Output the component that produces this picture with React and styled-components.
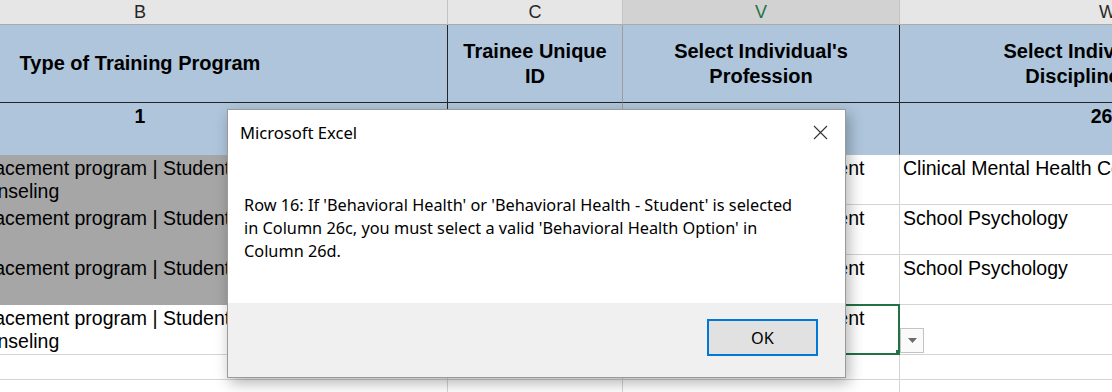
import React from "react";
import styled, { createGlobalStyle } from "styled-components";

const GlobalStyle = createGlobalStyle`
  html, body {
    margin: 0;
    padding: 0;
    background: #fff;
    overflow: hidden;
  }
  body {
    font-family: "Liberation Sans", Arial, sans-serif;
  }
`;

const BLUE = "#aec5db";
const GRID = "#d4d4d4";

const Page = styled.div`
  position: relative;
  width: 1112px;
  height: 392px;
  overflow: hidden;
  background: #fff;
`;

// sheet is scrolled: column B starts left of the window
const Sheet = styled.div`
  display: grid;
  grid-template-columns: 615px 175px 277px 416px;
  grid-template-rows: 25px 78px 52px 50px 50px 50px 50px 25px 25px;
  margin-left: -167px;
`;

const ColLetter = styled.div`
  box-sizing: border-box;
  display: flex;
  align-items: center;
  justify-content: center;
  background: ${(p) => (p.$active ? "#d2d2d2" : "#e6e6e6")};
  color: ${(p) => (p.$active ? "#217346" : "#262626")};
  border-right: 1px solid #c4c4c4;
  border-bottom: 1px solid #ababab;
  font-size: 18px;
`;

const HeadCell = styled.div`
  box-sizing: border-box;
  display: flex;
  align-items: center;
  justify-content: center;
  text-align: center;
  background: ${BLUE};
  border-right: 1px solid ${(p) => p.$edge || "#262626"};
  border-bottom: 1px solid #262626;
  font-weight: bold;
  font-size: 20px;
  line-height: 25px;
  color: #000;
  white-space: pre-line;
`;

const NumCell = styled.div`
  box-sizing: border-box;
  background: ${BLUE};
  border-right: 1px solid ${(p) => p.$edge || "#262626"};
  border-bottom: 1px solid ${BLUE};
  text-align: center;
  padding-top: 2px;
  font-weight: bold;
  font-size: 19.5px;
  line-height: 23px;
`;

const DataCell = styled.div`
  box-sizing: border-box;
  position: relative;
  background: ${(p) => p.$fill || "#fff"};
  border-right: 1px solid ${(p) => p.$fill || GRID};
  border-bottom: 1px solid ${(p) => p.$fill || GRID};
  padding: 2px 3px 0;
  font-size: 19.5px;
  line-height: 23px;
  color: #000;
  white-space: nowrap;
  overflow: ${(p) => (p.$selected ? "visible" : "hidden")};
`;

const Line = styled.div`
  overflow: hidden;
`;

const Selection = styled.div`
  position: absolute;
  top: -1px;
  left: -1px;
  right: -1px;
  bottom: -1px;
  border: 2px solid #217346;
  pointer-events: none;
`;

const Handle = styled.div`
  position: absolute;
  right: -3px;
  bottom: -2px;
  width: 5px;
  height: 5px;
  background: #217346;
`;

const DropButton = styled.div`
  position: absolute;
  left: calc(100% + 1px);
  top: 23px;
  width: 24px;
  height: 25px;
  box-sizing: border-box;
  border: 1px solid #c3c3c3;
  background: #fafafa;
  display: flex;
  align-items: center;
  justify-content: center;
  z-index: 1;
`;

const Dialog = styled.div`
  position: absolute;
  left: 227px;
  top: 109px;
  width: 619px;
  height: 269px;
  box-sizing: border-box;
  border: 1px solid #9a9a9a;
  background: #fff;
  box-shadow: 3px 5px 14px rgba(0, 0, 0, 0.3);
  display: flex;
  flex-direction: column;
  font-family: "Noto Sans", "Open Sans", sans-serif;
  color: #000;
  z-index: 2;
`;

const TitleBar = styled.div`
  height: 44px;
  display: flex;
  align-items: center;
  justify-content: space-between;
  padding: 0 17px 0 12px;
`;

const Title = styled.div`
  font-size: 16.6px;
  color: #000;
`;

const CloseX = styled.svg`
  width: 15px;
  height: 15px;
  display: block;
`;

const Message = styled.div`
  flex: 1;
  padding: 40px 16px 0;
  font-size: 16.3px;
  line-height: 23px;
  white-space: pre-line;
  color: #000;
`;

const Footer = styled.div`
  height: 74px;
  background: #f0f0f0;
  display: flex;
  justify-content: flex-end;
  align-items: flex-start;
  padding: 16px 27px 0 0;
  box-sizing: border-box;
`;

const OkButton = styled.button`
  width: 111px;
  height: 37px;
  box-sizing: border-box;
  border: 2px solid #0078d7;
  background: #e1e1e1;
  font-family: "Noto Sans", "Open Sans", sans-serif;
  font-size: 16.3px;
  color: #000;
  padding: 0;
`;

const letters = [
  { id: "B" },
  { id: "C" },
  { id: "V", active: true },
  { id: "W" },
];

const headers = [
  { text: "Type of Training Program" },
  { text: "Trainee Unique\nID", edge: "#9e9e9e" },
  { text: "Select Individual's\nProfession" },
  { text: "Select Individual's BH\nDiscipline Option" },
];

const numbers = [
  { text: "1" },
  { text: "2", edge: "#9e9e9e" },
  { text: "26c" },
  { text: "26d" },
];

const rows = [
  {
    program: ["Internship / field placement program | Student trainee in Clinical", "Mental Health Counseling"],
    gray: true,
    profession: "Behavioral Health - Student",
    discipline: "Clinical Mental Health Counseling",
  },
  {
    program: ["Internship / field placement program | Student trainee in"],
    gray: true,
    profession: "Behavioral Health - Student",
    discipline: "School Psychology",
  },
  {
    program: ["Internship / field placement program | Student trainee in"],
    gray: true,
    profession: "Behavioral Health - Student",
    discipline: "School Psychology",
  },
  {
    program: ["Internship / field placement program | Student trainee in Clinical", "Mental Health Counseling"],
    profession: "Behavioral Health - Student",
    discipline: "",
    selected: true,
  },
];

const message =
  "Row 16: If 'Behavioral Health' or 'Behavioral Health - Student' is selected\nin Column 26c, you must select a valid 'Behavioral Health Option' in\nColumn 26d.";

function App() {
  return (
    <Page>
      <GlobalStyle />
      <Sheet>
        {letters.map((l) => (
          <ColLetter key={l.id} $active={l.active}>
            {l.id}
          </ColLetter>
        ))}

        {headers.map((h, i) => (
          <HeadCell key={"h" + i} $edge={h.edge}>
            {h.text}
          </HeadCell>
        ))}

        {numbers.map((n, i) => (
          <NumCell key={"n" + i} $edge={n.edge}>
            {n.text}
          </NumCell>
        ))}

        {rows.map((r, i) => (
          <React.Fragment key={"r" + i}>
            <DataCell $fill={r.gray ? "#a6a6a6" : null}>
              {r.program.map((t, j) => (
                <Line key={j}>{t}</Line>
              ))}
            </DataCell>
            <DataCell />
            <DataCell $selected={r.selected}>
              <Line>{r.profession}</Line>
              {r.selected && (
                <>
                  <Selection>
                    <Handle />
                  </Selection>
                  <DropButton>
                    <svg width="9" height="5" viewBox="0 0 9 5">
                      <path d="M0 0 L9 0 L4.5 5 Z" fill="#6b6b6b" />
                    </svg>
                  </DropButton>
                </>
              )}
            </DataCell>
            <DataCell>
              <Line>{r.discipline}</Line>
            </DataCell>
          </React.Fragment>
        ))}

        {[0, 1].map((k) => (
          <React.Fragment key={"e" + k}>
            <DataCell />
            <DataCell />
            <DataCell />
            <DataCell />
          </React.Fragment>
        ))}
      </Sheet>

      <Dialog>
        <TitleBar>
          <Title>Microsoft Excel</Title>
          <CloseX viewBox="0 0 15 15">
            <path d="M1 1 L14 14 M14 1 L1 14" stroke="#333" strokeWidth="1.1" />
          </CloseX>
        </TitleBar>
        <Message>{message}</Message>
        <Footer>
          <OkButton>OK</OkButton>
        </Footer>
      </Dialog>
    </Page>
  );
}

export default App;
